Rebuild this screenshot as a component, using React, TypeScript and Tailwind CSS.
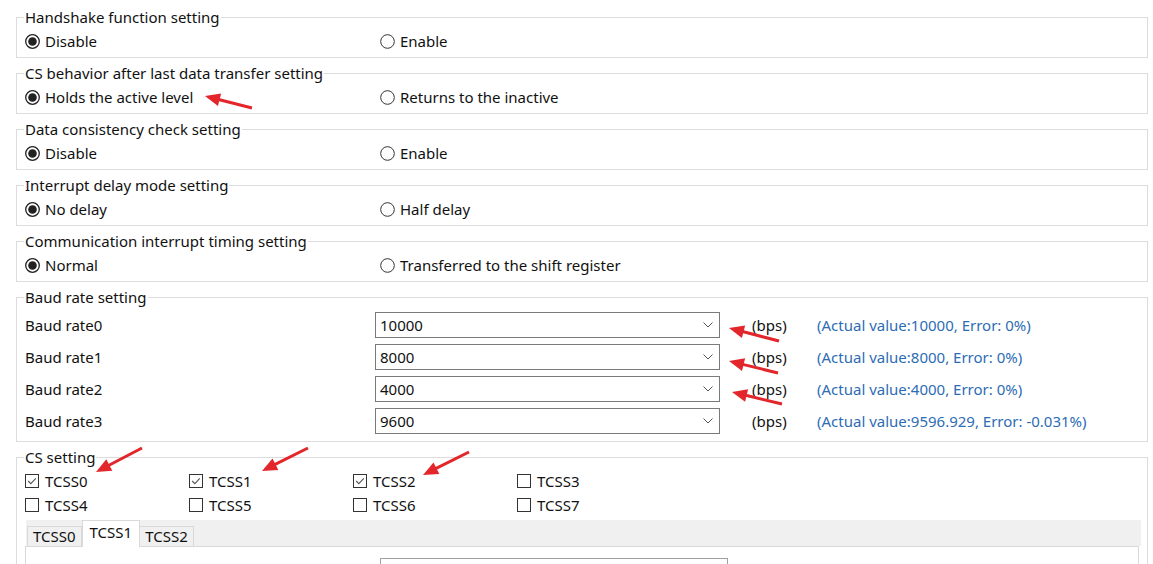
import type { ReactNode } from 'react';

const radioGroups = [
    { title: 'Handshake function setting', options: ['Disable', 'Enable'] },
    { title: 'CS behavior after last data transfer setting', options: ['Holds the active level', 'Returns to the inactive'] },
    { title: 'Data consistency check setting', options: ['Disable', 'Enable'] },
    { title: 'Interrupt delay mode setting', options: ['No delay', 'Half delay'] },
    { title: 'Communication interrupt timing setting', options: ['Normal', 'Transferred to the shift register'] },
];

const baudRates = [
    { label: 'Baud rate0', value: '10000', actual: '(Actual value:10000, Error: 0%)' },
    { label: 'Baud rate1', value: '8000', actual: '(Actual value:8000, Error: 0%)' },
    { label: 'Baud rate2', value: '4000', actual: '(Actual value:4000, Error: 0%)' },
    { label: 'Baud rate3', value: '9600', actual: '(Actual value:9596.929, Error: -0.031%)' },
];

const csPins = ['TCSS0', 'TCSS1', 'TCSS2', 'TCSS3', 'TCSS4', 'TCSS5', 'TCSS6', 'TCSS7'];
const checkedPins = ['TCSS0', 'TCSS1', 'TCSS2'];

// red annotation arrows: [tailX, tailY, tipX, tipY]
const arrows: [number, number, number, number][] = [
    [252, 108, 205, 96],
    [779, 341, 729, 328],
    [778, 373, 729, 361],
    [782, 404, 732, 392],
    [142, 448, 96, 472],
    [308, 448, 262, 471],
    [469, 452, 423, 475],
];

function Group({ title, children, bottom = 'pb-[5px]' }: { title: string; children: ReactNode; bottom?: string }) {
    return (
        <fieldset className="ml-[16px] mr-[5px] mt-[5px] border border-[#dcdcdc] px-0 first:mt-0">
            <legend className="ml-[7px] px-[1px] leading-5">{title}</legend>
            <div className={`pl-[8px] ${bottom}`}>{children}</div>
        </fieldset>
    );
}

function Radio({ checked, label }: { checked?: boolean; label: string }) {
    return (
        <div className="flex h-[22px] items-center gap-[5px]">
            <svg width="15" height="15" viewBox="0 0 15 15">
                <circle cx="7.5" cy="7.5" r="6.8" fill="white" stroke={checked ? '#222' : '#333'} strokeWidth={checked ? 1.3 : 1} />
                {checked && <circle cx="7.5" cy="7.5" r="4.3" fill="#222" />}
            </svg>
            <span>{label}</span>
        </div>
    );
}

function Checkbox({ checked, label }: { checked?: boolean; label: string }) {
    return (
        <div className="flex h-5 items-center gap-[6px]">
            <svg width="14" height="14" viewBox="0 0 14 14">
                <rect x="0.5" y="0.5" width="13" height="13" fill="white" stroke="#333" />
                {checked && <path d="M3.2 7l2.6 2.6 5-5.2" fill="none" stroke="#555" strokeWidth="1.1" />}
            </svg>
            <span>{label}</span>
        </div>
    );
}

function Arrow({ a }: { a: [number, number, number, number] }) {
    const [x1, y1, x2, y2] = a;
    const len = Math.hypot(x2 - x1, y2 - y1);
    const ux = (x2 - x1) / len;
    const uy = (y2 - y1) / len;
    const head = 15;
    const half = 6.5;
    const bx = x2 - ux * head;
    const by = y2 - uy * head;
    const pts = `${x2},${y2} ${bx - uy * half},${by + ux * half} ${bx + uy * half},${by - ux * half}`;
    return (
        <g>
            <line x1={x1} y1={y1} x2={bx + ux * 2} y2={by + uy * 2} stroke="#e3262b" strokeWidth="3" />
            <polygon points={pts} fill="#e3262b" />
        </g>
    );
}

export default function App() {
    return (
        <div className="relative h-[564px] w-[1153px] overflow-hidden bg-white pt-[7px] font-['Noto_Sans',sans-serif] text-[15px] text-[#111]">
            {radioGroups.map((g) => (
                <Group key={g.title} title={g.title}>
                    <div className="mt-[3px] grid grid-cols-[355px_1fr]">
                        <Radio checked label={g.options[0]} />
                        <Radio label={g.options[1]} />
                    </div>
                </Group>
            ))}

            <Group title="Baud rate setting" bottom="pb-[7px]">
                <div className="mt-[5px] flex flex-col gap-[6px]">
                    {baudRates.map((b) => (
                        <div key={b.label} className="flex h-[26px] items-center">
                            <span className="w-[350px]">{b.label}</span>
                            <div className="flex h-[26px] w-[345px] items-center justify-between border border-[#7a7a7a] pl-[4px] pr-[6px]">
                                <span>{b.value}</span>
                                <svg width="10" height="6" viewBox="0 0 10 6">
                                    <path d="M0.5 0.5l4.5 4.5 4.5-4.5" fill="none" stroke="#555" strokeWidth="1" />
                                </svg>
                            </div>
                            <span className="ml-[32px] w-[65px]">(bps)</span>
                            <span className="text-[#2d6db4]">{b.actual}</span>
                        </div>
                    ))}
                </div>
            </Group>

            <Group title="CS setting">
                <div className="mt-[4px] grid grid-cols-[164px_164px_164px_164px] gap-y-[4px]">
                    {csPins.map((p) => (
                        <Checkbox key={p} label={p} checked={checkedPins.includes(p)} />
                    ))}
                </div>
                <div className="mr-[6px] ml-[1px] mt-[5px] flex h-[26px] items-end bg-[#f0f0f0] pl-[1px]">
                    <div className="h-[20px] border border-b-0 border-[#d9d9d9] bg-[#f0f0f0] px-[5px] leading-[19px]">TCSS0</div>
                    <div className="relative z-10 -mb-px h-[27px] border border-b-0 border-[#d9d9d9] bg-white px-[7px] leading-[22px]">TCSS1</div>
                    <div className="h-[20px] border border-b-0 border-l-0 border-[#d9d9d9] bg-[#f0f0f0] px-[5px] leading-[19px]">TCSS2</div>
                </div>
                <div className="mr-[8px] h-[40px] border border-[#d9d9d9] bg-white pt-[11px]">
                    <div className="ml-[354px] h-[20px] w-[348px] border border-[#a0a0a0]" />
                </div>
            </Group>

            <svg className="pointer-events-none absolute left-0 top-0" width="1153" height="564">
                {arrows.map((a, i) => (
                    <Arrow key={i} a={a} />
                ))}
            </svg>
        </div>
    );
}
